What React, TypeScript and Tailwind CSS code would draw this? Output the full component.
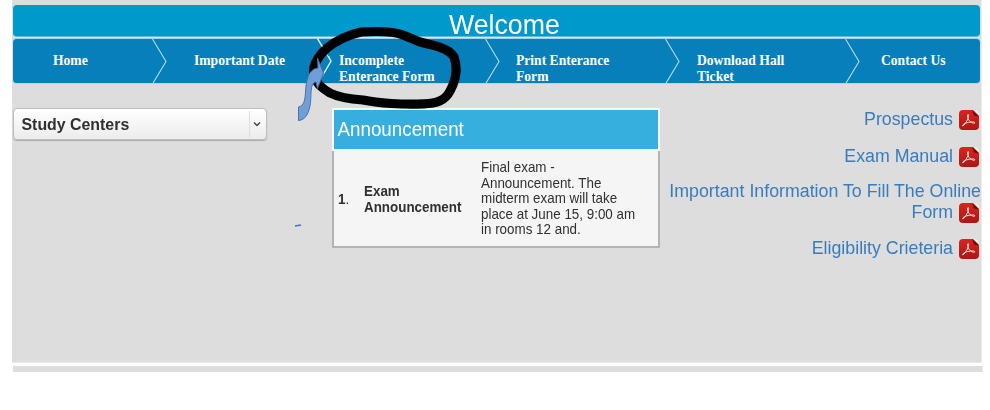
import React from "react";

function Chevron() {
  return (
    <svg className="h-[45px] w-[15px] shrink-0" viewBox="0 0 15 45" fill="none">
      <path d="M.5 0 14 22.500.500 45" stroke="#b5dcf0" strokeWidth="1.1" />
    </svg>
  );
}

function PdfIcon() {
  return (
    <svg className="mt-[2px] mr-[2px] ml-[6px] inline-block h-5 w-5 shrink-0" viewBox="0 0 20 20">
      <defs>
        <linearGradient id="red" x1="0" y1="0" x2="0" y2="1">
          <stop offset="0" stopColor="#d9241f" />
          <stop offset="1" stopColor="#ad1715" />
        </linearGradient>
      </defs>
      <path d="M4 0h10.500L20 5.500V16a4 4 0 0 1-4 4H4a4 4 0 0 1-4-4V4a4 4 0 0 1 4-4Z" fill="url(#red)" />
      <path d="M14 0h2.500Q20 1 20 4.500V6Z" fill="#f7eeee" />
      <path d="M13.500 0 20 6.300q-3.500-.2-5.200-1.100Q13.800 3.800 13.500 0Z" fill="#720909" />
      <path
        d="M9 4.500C8 4.700 8.500 7.200 9.300 9c1 2.100 2.800 3.700 5 4.200 1.900.4 2.200-.8.500-1.200-3-.4-7.200.5-9.800 2-2 1.100-1.900 2.700-.3 1.400C6.800 13.500 9.200 9 9.600 6.200 9.700 5 9.500 4.400 9 4.500Z"
        fill="none"
        stroke="#f6dcda"
        strokeWidth="1"
      />
    </svg>
  );
}

function NavItem({ className, children }: { className: string; children: React.ReactNode }) {
  return <a className={`${className} shrink-0 pt-[13.500px] whitespace-nowrap`}>{children}</a>;
}

function LinkText({ children }: { children: React.ReactNode }) {
  return <span className="inline-block scale-y-[1.060] pt-[0.500px]">{children}</span>;
}

function Annotations() {
  return (
    <svg className="pointer-events-none absolute top-0 left-0 h-[240px] w-[480px]" viewBox="0 0 480 240" fill="none">
      <defs>
        <filter id="soft" x="-10%" y="-10%" width="120%" height="120%">
          <feGaussianBlur stdDeviation=".7" />
        </filter>
      </defs>
      <g filter="url(#soft)" stroke="#000" strokeLinecap="round" strokeLinejoin="round">
        <path
          d="M361 32C378 31 393 31 403 35L420 42C435 46 449 48 454 57C458 68 456 80 450 91C445 101 436 103.500 424 103.800C404 105 377 103 363 100C348 99 338 97 330 93C323 89 316 83 314.500 77C311 68 317 57 327 48C338 39 348 35 361 32Z"
          strokeWidth="9.200"
        />
      </g>
      <path d="m317.500 38.500 5 8M328.500 56l2.500 5-7 12" stroke="#d9edf5" strokeWidth="1.200" />
      <path
        d="M317.500 58 323.500 73 317.500 88.500 316 82C309 83 312 97 310 106C308 116 304 120 298.500 120.500V107C304 106 305 100 305.500 92C306 79 309 69 318 68Z"
        fill="#719fd5"
        stroke="#3d69ad"
        strokeWidth=".9"
      />
      <path d="M295 226c2-.8 3.500-.3 6-1" stroke="#4773b2" strokeWidth="1.500" />
    </svg>
  );
}

export default function App() {
  return (
    <div className="relative h-[410px] w-[990px] overflow-hidden bg-white font-['Liberation_Sans',sans-serif]">
      <main className="ml-3 h-[363px] w-[970px] border-r border-b border-[#ececec] bg-[#dddddd] pt-[5px] pl-px">
        <header className="h-[32px] w-[967px] rounded-[4px] border-b border-[#62b9dc] bg-[#0099cc] pl-[436px] text-[26.700px] leading-[39px] text-white">
          <span className="inline-block scale-y-[1.060]">Welcome</span>
        </header>
        <div className="h-px w-[967px] bg-[#d5e7f0]" />
        <nav className="flex h-[46px] w-[967px] overflow-hidden rounded-[4px] border-t border-b border-t-[#a9d1e5] border-b-[#b4d4e4] bg-[#067fba] font-['Liberation_Serif',serif] text-[13.600px] leading-4 font-bold text-white">
          <NavItem className="w-[139px] pl-[40px]">Home</NavItem>
          <Chevron />
          <NavItem className="w-[150px] pl-[27px]">Important Date</NavItem>
          <Chevron />
          <NavItem className="w-[153px] pl-[7px]">Incomplete<br />Enterance Form</NavItem>
          <Chevron />
          <NavItem className="w-[165px] pl-[16px]">Print Enterance<br />Form</NavItem>
          <Chevron />
          <NavItem className="w-[165px] pl-[17px]">Download Hall<br />Ticket</NavItem>
          <Chevron />
          <NavItem className="w-[120px] pl-[21px]">Contact Us</NavItem>
        </nav>
        <div className="flex w-[968px] pt-[24px]">
          <button className="flex h-8 w-[254px] shrink-0 items-center rounded-[4px] border border-[#bdbdbd] bg-gradient-to-b from-white to-[#ececec] text-left text-[15.900px] font-bold text-[#303030] shadow-[0_1px_1px_#aaaaaa]">
            <span className="flex-1 scale-y-[1.050] pt-[2px] pl-[7.500px]">Study Centers</span>
            <span className="h-[26px] w-px bg-[#dddddd]" />
            <svg className="mr-[5px] ml-[3px] h-[7px] w-[8px]" viewBox="0 0 8 7" fill="none">
              <path d="m1 1.500 3 3 3-3" stroke="#444" strokeWidth="1.500" />
            </svg>
          </button>
          <section className="ml-[65px] h-[140px] w-[328px] shrink-0">
            <h2 className="h-[43px] border-2 border-[#f8fcfd] bg-[#37afde] pl-[3.500px] text-[18.800px] leading-[39px] text-white">
              <span className="inline-block scale-y-[1.050]">Announcement</span>
            </h2>
            <div className="flex h-[97px] items-center border-x-2 border-b-2 border-[#b3b3b3] bg-[#f5f5f5] text-[13.400px] leading-[15.100px] text-[#303030]">
              <div className="w-[30px] scale-y-[1.040] pt-[2px] pl-1"><b>1</b>.</div>
              <b className="w-[117px] scale-y-[1.040] pt-[2px]">Exam<br />Announcement</b>
              <p className="scale-y-[1.040] pt-px whitespace-nowrap">
                Final exam -<br />Announcement. The<br />midterm exam will take<br />place at June 15, 9:00 am<br />in rooms 12 and.
              </p>
            </div>
          </section>
          <aside className="flex flex-1 flex-col items-end text-[17.800px] leading-[21px] whitespace-nowrap text-[#397cbc]">
            <a className="flex h-[36.500px]"><LinkText>Prospectus</LinkText><PdfIcon /></a>
            <a className="flex h-[35.500px]"><LinkText>Exam Manual</LinkText><PdfIcon /></a>
            <a className="h-[21px]"><LinkText>Important Information To Fill The Online</LinkText></a>
            <a className="flex h-[36px]"><LinkText>Form</LinkText><PdfIcon /></a>
            <a className="flex h-[36px]"><LinkText>Eligibility Crieteria</LinkText><PdfIcon /></a>
          </aside>
        </div>
      </main>
      <footer className="mt-[3px] ml-[13px] h-[6px] w-[970px] border-r border-[#eeeeee] bg-[#dddddd]" />
      <Annotations />
    </div>
  );
}
